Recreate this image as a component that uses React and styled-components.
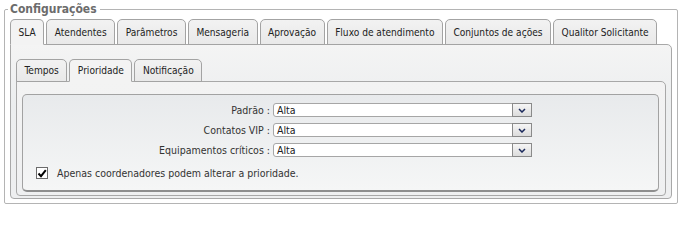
import React, { useState } from 'react';
import styled, { createGlobalStyle } from 'styled-components';

const GlobalStyle = createGlobalStyle`
  body {
    margin: 0;
    background: #ffffff;
    font-family: "DejaVu Sans Condensed", "DejaVu Sans", sans-serif;
    font-stretch: condensed;
    font-size: 10.5px;
    color: #333333;
  }
`;

const outerTabs = [
  'SLA',
  'Atendentes',
  'Parâmetros',
  'Mensageria',
  'Aprovação',
  'Fluxo de atendimento',
  'Conjuntos de ações',
  'Qualitor Solicitante',
];

const innerTabs = ['Tempos', 'Prioridade', 'Notificação'];

const priorityFields = ['Padrão', 'Contatos VIP', 'Equipamentos críticos'];

const Fieldset = styled.fieldset`
  box-sizing: border-box;
  width: 674px;
  min-width: 0;
  margin: 1px 0 0 4px;
  padding: 2px 5px 4px 5px;
  border: 1px solid #b4b4b4;
  border-radius: 2px;
`;

const Legend = styled.legend`
  padding: 0 3px 0 2px;
  margin-left: -2px;
  font-size: 12px;
  line-height: 16px;
  font-weight: bold;
  color: #6c6c6c;
`;

const TabBar = styled.div`
  display: flex;
  gap: 2px;
  position: relative;
  z-index: 1;
`;

const Tab = styled.div`
  box-sizing: border-box;
  height: ${(p) => (p.$small ? 23 : 26)}px;
  padding: 0 7.5px;
  display: flex;
  align-items: center;
  justify-content: center;
  border: 1px solid #a3a3a3;
  border-bottom-color: ${(p) => (p.$active ? 'transparent' : '#a3a3a3')};
  border-radius: 5px 5px 0 0;
  background: ${(p) =>
    p.$active
      ? '#f3f3f3'
      : 'linear-gradient(#f2f2f2, #e9e9e9)'};
  color: #222222;
  font-size: 10.1px;
  white-space: nowrap;
  cursor: pointer;
  margin-bottom: -1px;
`;

const Panel = styled.div`
  border: 1px solid #a8a8a8;
  border-radius: 0 5px 4px 4px;
  padding: ${(p) => p.$pad};
  background: ${(p) => p.$bg};
`;

const FormBox = styled.div`
  border: 1px solid #a2a2a2;
  border-bottom: 2px solid #8e8e8e;
  border-radius: 5px;
  padding: 8px 0 11px 0;
  background: linear-gradient(#e8eaec, #f5f6f6);
`;

const FieldGrid = styled.div`
  display: grid;
  grid-template-columns: 247px 259px;
  column-gap: 3px;
  row-gap: 6px;
`;

const FieldLabel = styled.div`
  text-align: right;
  line-height: 14px;
  color: #333333;
  white-space: nowrap;
`;

const SelectBox = styled.div`
  box-sizing: border-box;
  height: 14px;
  display: flex;
  align-items: stretch;
  border: 1px solid #a6a6a6;
  border-radius: 3px 0 0 3px;
  background: #ffffff;
`;

const SelectValue = styled.div`
  flex: 1;
  padding-left: 3px;
  line-height: 12px;
  color: #222222;
`;

const SelectButton = styled.div`
  width: 18px;
  margin: -1px -1px -1px 0;
  border: 1px solid #8a8a8a;
  background: linear-gradient(#f6f6f6, #dcdcdc);
  display: flex;
  align-items: center;
  justify-content: center;
`;

const CheckRow = styled.label`
  display: flex;
  align-items: center;
  gap: 9px;
  margin: 10px 0 0 13px;
  color: #333333;
  cursor: pointer;
`;

const CheckBox = styled.span`
  box-sizing: border-box;
  width: 12px;
  height: 12px;
  border: 1px solid #6b6b6b;
  background: #ffffff;
  display: flex;
  align-items: center;
  justify-content: center;
`;

function Select({ value }) {
  return (
    <SelectBox>
      <SelectValue>{value}</SelectValue>
      <SelectButton>
        <svg width="8" height="5" viewBox="0 0 8 5">
          <polyline points="1,1 4,4 7,1" fill="none" stroke="#1b2a5c" strokeWidth="1.5" />
        </svg>
      </SelectButton>
    </SelectBox>
  );
}

export default function App() {
  const [outer, setOuter] = useState(0);
  const [inner, setInner] = useState(1);
  const [checked, setChecked] = useState(true);

  return (
    <>
      <GlobalStyle />
      <Fieldset>
        <Legend>Configurações</Legend>
        <TabBar>
          {outerTabs.map((t, i) => (
            <Tab key={t} $active={i === outer} onClick={() => setOuter(i)}>
              {t}
            </Tab>
          ))}
        </TabBar>
        <Panel $pad="14px 5px 2px 5px" $bg="linear-gradient(#f4f4f4, #eceeef 40%, #eeeff0)">
          <TabBar>
            {innerTabs.map((t, i) => (
              <Tab key={t} $small $active={i === inner} onClick={() => setInner(i)}>
                {t}
              </Tab>
            ))}
          </TabBar>
          <Panel $pad="12px 6px 3px 5px" $bg="linear-gradient(#f3f3f3, #eff0f1)">
            <FormBox>
              <FieldGrid>
                {priorityFields.map((f) => (
                  <React.Fragment key={f}>
                    <FieldLabel>{f} :</FieldLabel>
                    <Select value="Alta" />
                  </React.Fragment>
                ))}
              </FieldGrid>
              <CheckRow onClick={() => setChecked(!checked)}>
                <CheckBox>
                  {checked && (
                    <svg width="10" height="9" viewBox="0 0 10 9">
                      <polyline points="1.5,4.5 4,7.2 8.8,1.2" fill="none" stroke="#000" strokeWidth="2" />
                    </svg>
                  )}
                </CheckBox>
                Apenas coordenadores podem alterar a prioridade.
              </CheckRow>
            </FormBox>
          </Panel>
        </Panel>
      </Fieldset>
    </>
  );
}
